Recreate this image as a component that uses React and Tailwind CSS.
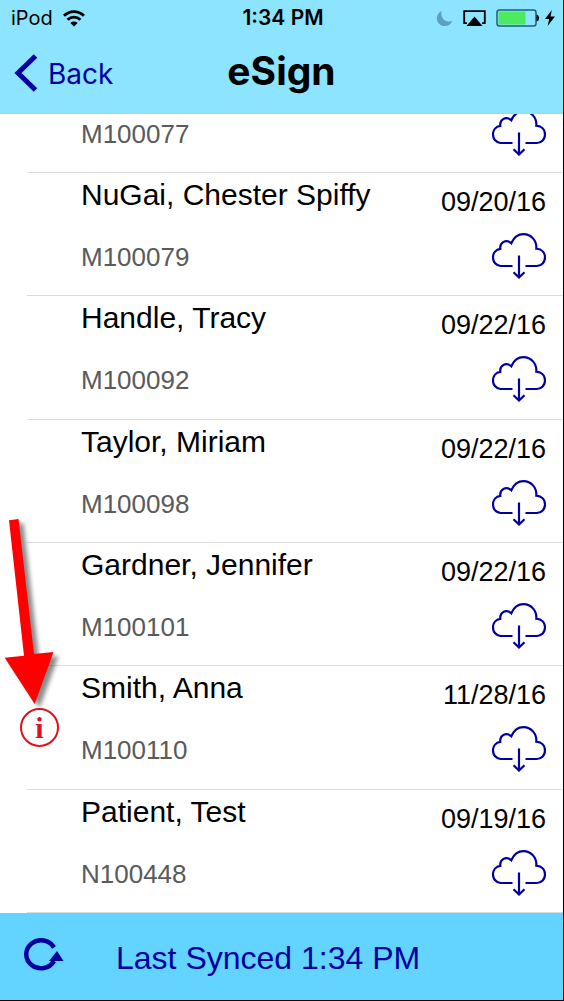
const patients = [
  { name: "NuGai, Chester Spiffy", id: "M100079", date: "09/20/16" },
  { name: "Handle, Tracy", id: "M100092", date: "09/22/16" },
  { name: "Taylor, Miriam", id: "M100098", date: "09/22/16" },
  { name: "Gardner, Jennifer", id: "M100101", date: "09/22/16" },
  { name: "Smith, Anna", id: "M100110", date: "11/28/16", info: true },
  { name: "Patient, Test", id: "N100448", date: "09/19/16" },
];

function WifiIcon() {
  return (
    <svg width="22" height="17" viewBox="0 0 22 17" fill="none" stroke="black" strokeWidth="2.8">
      <path d="M1 5.8C6.6 .2 15.4 .2 21 5.8" />
      <path d="M4.6 9.8C8.3 6.1 13.7 6.1 17.4 9.8" />
      <path d="M11 16.5L7.4 12.9C9.4 10.9 12.6 10.9 14.6 12.9Z" fill="black" stroke="none" />
    </svg>
  );
}

function MoonIcon() {
  return (
    <svg width="17" height="17" viewBox="0 0 17 17">
      <path d="M5.5 1C-.5 4 -.5 11.5 4 14.5C8.5 17.6 14.5 15.8 16.5 11C11 13.2 4 9.5 5.5 1Z" fill="#5f9fc0" />
    </svg>
  );
}

function AirplayIcon() {
  return (
    <svg width="23" height="17" viewBox="0 0 23 17">
      <path d="M4 13.2H1.2V1.2H21.8V13.2H19" fill="none" stroke="black" strokeWidth="1.8" />
      <path d="M11.5 6.5L19.5 16H3.5Z" fill="black" />
    </svg>
  );
}

function BatteryIcon() {
  return (
    <svg width="43" height="18" viewBox="0 0 43 18">
      <rect x="1" y="1" width="39" height="16" rx="2.5" fill="none" stroke="#1c5f7d" strokeWidth="1.5" />
      <rect x="2.5" y="2.5" width="27" height="13" rx="1" fill="#4cea5f" />
      <path d="M40.5 5.5Q43 6 43 9T40.5 12.5Z" fill="black" />
    </svg>
  );
}

function BoltIcon() {
  return (
    <svg width="10" height="16" viewBox="0 0 10 16">
      <path d="M6.8 0L0 9H4.2L2.6 16L10 6.5H5.6Z" fill="black" />
    </svg>
  );
}

function CloudIcon() {
  return (
    <svg width="54" height="46" viewBox="0 0 54 46" fill="none" stroke="#0000a0" strokeWidth="2.2">
      <path d="M20.5 33H8.5C3.5 32 1 28.5 1 24.3C1 20 4 16.5 8.3 15.8C7.5 9.5 14 5.5 19.3 10.3C22 4 26.5 1.2 31.5 1.2C39 1.2 45 7.5 44.3 15.7C50 16.2 53 20 53 24.3C53 29.5 49.5 33 45 33H33.5" />
      <path d="M27 22.5V45M21.5 39.3L27 44.5L32.5 39.3" />
    </svg>
  );
}

function RefreshIcon() {
  return (
    <svg width="40" height="34" viewBox="0 0 40 34">
      <path d="M30 9.5A14.8 14 0 1 0 30 23" fill="none" stroke="#0000a0" strokeWidth="4.5" />
      <path d="M33 13L39.5 23H25Z" fill="#0000a0" />
    </svg>
  );
}

function PointerArrow() {
  return (
    <svg
      className="absolute left-0 -top-[147px] pointer-events-none drop-shadow-[5px_4px_2px_rgba(0,0,0,0.45)]"
      width="56"
      height="186"
      viewBox="0 0 56 186"
    >
      <path d="M9 1.3L18.5 0L34 135L53.5 133L34.7 185L4.7 138.7L24 136.7Z" fill="#ff0000" />
    </svg>
  );
}

function DownloadButton({ label }) {
  return (
    <button type="button" aria-label={label} className="block">
      <CloudIcon />
    </button>
  );
}

function PatientRow({ patient }) {
  return (
    <li className="relative flex flex-1">
      <div className="w-[81px] shrink-0 flex items-center pl-5">
        {patient.info && (
          <button
            type="button"
            aria-label="Information"
            className="size-[39px] rounded-full border-2 border-[#e2101c] flex items-center justify-center font-['Liberation_Serif',serif] font-bold text-[30px] leading-[30px] text-[#e2101c]"
          >
            i
          </button>
        )}
      </div>
      <div className="flex-1 min-w-0 pt-1">
        <p className="text-[30px] leading-9 text-black">{patient.name}</p>
        <p className="mt-7 text-[26px] leading-8 text-[#5a5a5a]">{patient.id}</p>
      </div>
      <div className="shrink-0 flex flex-col items-end pt-[13px] pr-[17px]">
        <p className="text-[27px] leading-8 text-black">{patient.date}</p>
        <div className="mt-[15px]">
          <DownloadButton label={`Download ${patient.name}`} />
        </div>
      </div>
      <div className="absolute bottom-0 left-[27px] right-0 h-px bg-[#dcdcde]" />
      {patient.info && <PointerArrow />}
    </li>
  );
}

export default function App() {
  return (
    <div className="h-screen flex flex-col bg-white border-r border-b border-black font-['Liberation_Sans',Arial,sans-serif]">
      <header className="shrink-0 h-[114px] bg-[#8de4ff] border-b border-[#b9cdd5] font-['Inter',sans-serif]">
        <div className="grid grid-cols-3 items-center h-9 pl-[11px] pr-2">
          <div className="flex items-center gap-2.5 text-[20px]">
            <span>iPod</span>
            <WifiIcon />
          </div>
          <span className="text-center text-[21px] font-semibold">1:34 PM</span>
          <div className="flex items-center justify-end">
            <MoonIcon />
            <span className="ml-2.5"><AirplayIcon /></span>
            <span className="ml-2.5"><BatteryIcon /></span>
            <span className="ml-1.5"><BoltIcon /></span>
          </div>
        </div>
        <div className="grid grid-cols-3 items-center h-[70px] px-3.5">
          <button type="button" className="flex items-center gap-2.5 pt-1 text-[28px] leading-9 text-[#0000a0]">
            <svg width="24" height="38" viewBox="0 0 24 38" fill="none" stroke="#0000a0" strokeWidth="5">
              <path d="M21.5 2L4 19L21.5 36" />
            </svg>
            <span className="pt-0.5">Back</span>
          </button>
          <h1 className="text-center text-[39px] leading-[48px] font-bold text-black">eSign</h1>
        </div>
      </header>

      <ul className="flex-1 min-h-0 flex flex-col overflow-hidden">
        <li className="relative shrink-0 h-[59px] flex items-end overflow-hidden pl-[81px] pr-[17px]">
          <p className="flex-1 pb-[23px] text-[26px] leading-8 text-[#5a5a5a]">M100077</p>
          <div className="shrink-0 pb-[17px]">
            <DownloadButton label="Download M100077" />
          </div>
          <div className="absolute bottom-0 left-[27px] right-0 h-px bg-[#dcdcde]" />
        </li>
        {patients.map((patient) => (
          <PatientRow key={patient.id} patient={patient} />
        ))}
      </ul>

      <footer className="shrink-0 h-[87px] bg-[#62d4ff] flex items-center pl-6 text-[#0000a0]">
        <button type="button" aria-label="Sync now" className="pb-1">
          <RefreshIcon />
        </button>
        <p className="pl-[52px] pt-0.5 text-[32px] leading-9">Last Synced 1:34 PM</p>
      </footer>
    </div>
  );
}
